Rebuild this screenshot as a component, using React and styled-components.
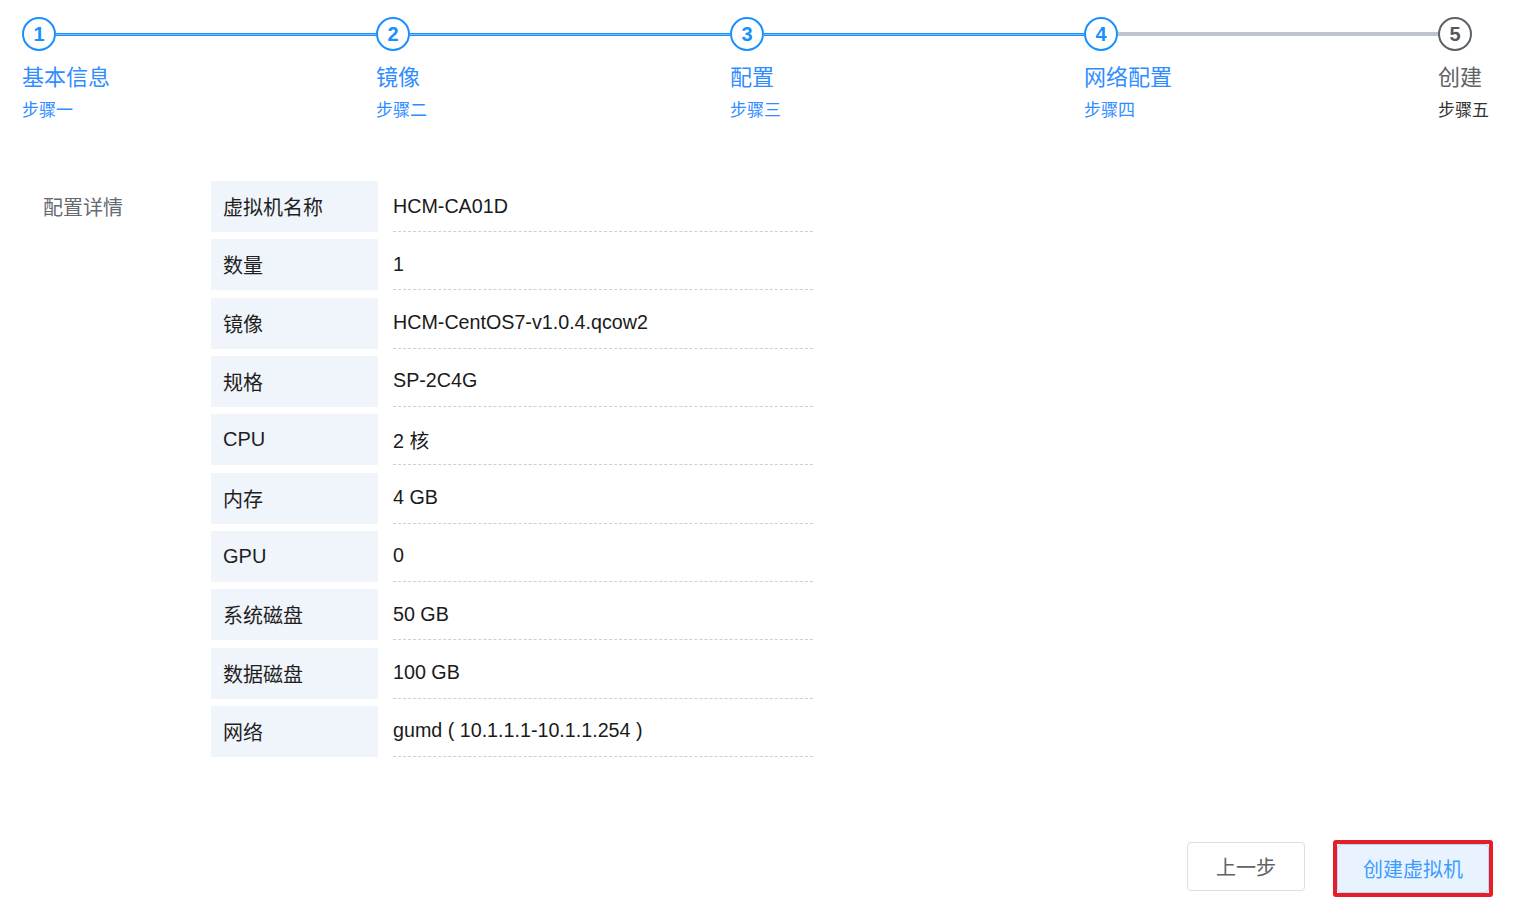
import React from "react";
import styled, { createGlobalStyle } from "styled-components";

const GlobalStyle = createGlobalStyle`
  html, body { margin: 0; padding: 0; background: #fff; }
  body {
    font-family: "Liberation Sans", Arial, "Noto Sans CJK SC", sans-serif;
    color: #303133;
  }
`;

const Page = styled.div`
  width: 1517px;
  min-height: 905px;
  box-sizing: border-box;
  padding: 17px 24px 0 22px;
  display: flex;
  flex-direction: column;
`;

const Steps = styled.div`
  display: flex;
  padding-right: 4px;
`;

const Step = styled.div`
  display: flex;
  flex-direction: column;
  flex: ${(p) => (p.$last ? "0 0 auto" : "1 1 0")};
  min-width: 0;
`;

const StepHead = styled.div`
  display: flex;
  align-items: center;
  height: 34px;
`;

const Circle = styled.div`
  width: 34px;
  height: 34px;
  box-sizing: border-box;
  border-radius: 50%;
  border: 2px solid ${(p) => (p.$active ? "#1890ff" : "#5f6166")};
  color: ${(p) => (p.$active ? "#1890ff" : "#55575c")};
  display: flex;
  align-items: center;
  justify-content: center;
  font-weight: bold;
  font-size: 20px;
  flex: 0 0 auto;
`;

const Line = styled.div`
  flex: 1;
  height: ${(p) => (p.$done ? "3px" : "4px")};
  background: ${(p) =>
    p.$done
      ? "linear-gradient(#1890ff 0 1px, #7dbfff 1px 2px, #1890ff 2px 3px)"
      : "#c0c4cc"};
`;

const StepTitle = styled.div`
  margin-top: 9px;
  font-size: 22px;
  line-height: 30px;
  color: ${(p) => (p.$active ? "#2f8dff" : "#606266")};
  font-family: "Noto Sans CJK SC", sans-serif;
  white-space: nowrap;
`;

const StepDesc = styled.div`
  margin-top: 7px;
  font-size: 17px;
  line-height: 24px;
  color: ${(p) => (p.$active ? "#2f8dff" : "#303133")};
  font-family: "Noto Sans CJK SC", sans-serif;
  white-space: nowrap;
`;

const Section = styled.div`
  display: flex;
  margin-top: 60px;
  padding-left: 21px;
`;

const SectionLabel = styled.div`
  width: 168px;
  flex: 0 0 auto;
  height: 51px;
  display: flex;
  align-items: center;
  font-size: 20px;
  color: #666a70;
  font-family: "Noto Sans CJK SC", sans-serif;
`;

const Rows = styled.div`
  display: flex;
  flex-direction: column;
  gap: 7.33px;
`;

const Row = styled.div`
  display: flex;
  height: 51px;
`;

const KeyCell = styled.div`
  width: 167px;
  box-sizing: border-box;
  padding-left: 12px;
  background: #f0f4fb;
  display: flex;
  align-items: center;
  font-size: 20px;
  color: #1f1f1f;
`;

const ValueCell = styled.div`
  width: 420px;
  margin-left: 15px;
  box-sizing: border-box;
  border-bottom: 1px dashed #cfcfcf;
  display: flex;
  align-items: center;
  font-size: 19.7px;
  color: #1a1a1a;
`;

const Footer = styled.div`
  display: flex;
  justify-content: flex-end;
  align-items: center;
  gap: 28px;
  margin-top: 80px;
`;

const Button = styled.button`
  height: 49px;
  box-sizing: border-box;
  padding: 0 ${(p) => (p.$primary ? "25px" : "28px")};
  border-radius: 4px;
  font-size: 20px;
  font-family: "Noto Sans CJK SC", sans-serif;
  border: 1px solid ${(p) => (p.$primary ? "#b3d8ff" : "#dcdfe6")};
  background: ${(p) => (p.$primary ? "#e8f3ff" : "#fff")};
  color: ${(p) => (p.$primary ? "#3d9bff" : "#606266")};
  cursor: pointer;
`;

const Highlight = styled.div`
  border: 4px solid #e81e27;
  border-radius: 3px;
  display: flex;
  margin-top: 3px;
`;

const steps = [
  { n: 1, title: "基本信息", desc: "步骤一" },
  { n: 2, title: "镜像", desc: "步骤二" },
  { n: 3, title: "配置", desc: "步骤三" },
  { n: 4, title: "网络配置", desc: "步骤四" },
  { n: 5, title: "创建", desc: "步骤五" },
];

const details = [
  ["虚拟机名称", "HCM-CA01D"],
  ["数量", "1"],
  ["镜像", "HCM-CentOS7-v1.0.4.qcow2"],
  ["规格", "SP-2C4G"],
  ["CPU", "2 核"],
  ["内存", "4 GB"],
  ["GPU", "0"],
  ["系统磁盘", "50 GB"],
  ["数据磁盘", "100 GB"],
  ["网络", "gumd ( 10.1.1.1-10.1.1.254 )"],
];

export default function App() {
  const activeIdx = 3;
  return (
    <>
      <GlobalStyle />
      <Page>
        <Steps>
          {steps.map((s, i) => {
            const last = i === steps.length - 1;
            const active = i <= activeIdx;
            return (
              <Step key={s.n} $last={last}>
                <StepHead>
                  <Circle $active={active}>{s.n}</Circle>
                  {!last && <Line $done={i < activeIdx} />}
                </StepHead>
                <StepTitle $active={active}>{s.title}</StepTitle>
                <StepDesc $active={active}>{s.desc}</StepDesc>
              </Step>
            );
          })}
        </Steps>
        <Section>
          <SectionLabel>配置详情</SectionLabel>
          <Rows>
            {details.map(([k, v]) => (
              <Row key={k}>
                <KeyCell>{k}</KeyCell>
                <ValueCell>{v}</ValueCell>
              </Row>
            ))}
          </Rows>
        </Section>
        <Footer>
          <Button>上一步</Button>
          <Highlight>
            <Button $primary>创建虚拟机</Button>
          </Highlight>
        </Footer>
      </Page>
    </>
  );
}
